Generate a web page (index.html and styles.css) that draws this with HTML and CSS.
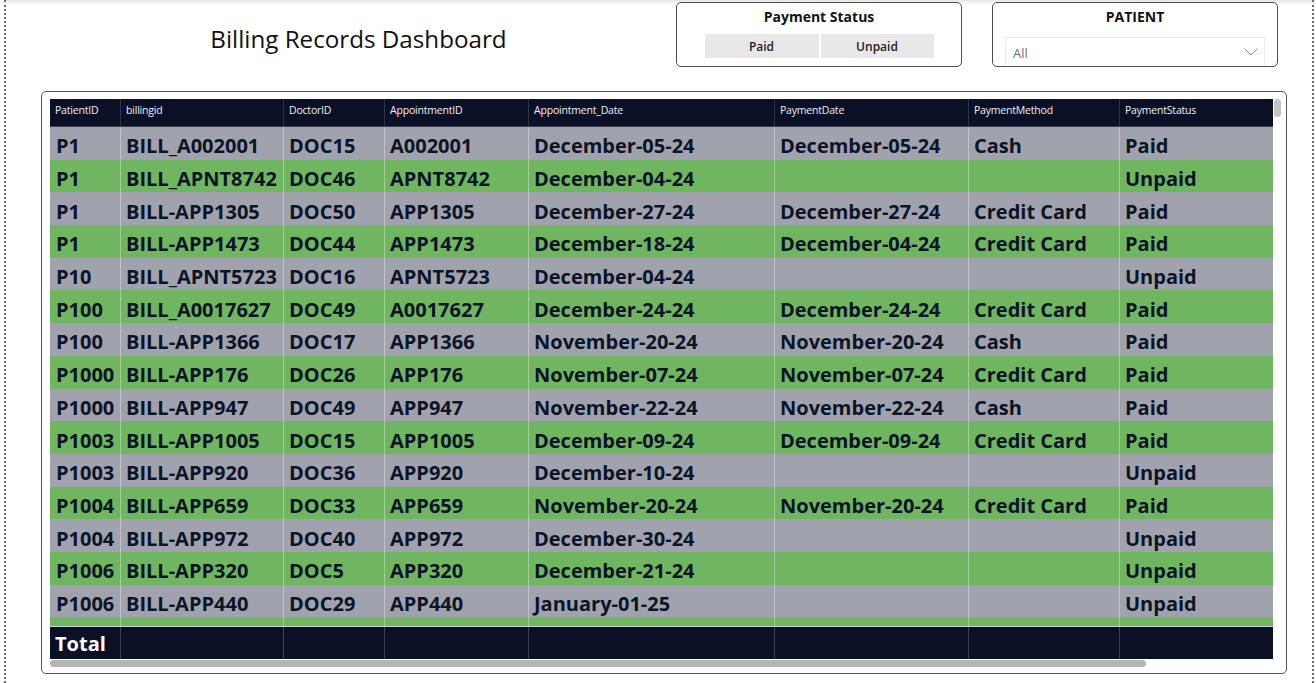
FILE: index.html
```html
<!DOCTYPE html>
<html lang="en">
<head>
<meta charset="utf-8">
<title>Billing Records Dashboard</title>
<link rel="stylesheet" href="styles.css">
</head>
<body>
<div class="page">
  <div class="top">
    <div class="title-box"><h1 class="title">Billing Records Dashboard</h1></div>
    <div class="slicer">
      <div class="slicer-title">Payment Status</div>
      <div class="chips">
        <div class="chip">Paid</div>
        <div class="chip">Unpaid</div>
      </div>
    </div>
    <div class="slicer slicer-patient">
      <div class="slicer-title">PATIENT</div>
      <div class="dropdown">
        <span class="dd-value">All</span>
        <svg class="chev" width="14" height="8" viewBox="0 0 14 8"><path d="M0.5 0.5 L7 7 L13.5 0.5" fill="none" stroke="#8a8a8a" stroke-width="1"/></svg>
      </div>
    </div>
  </div>

  <div class="visual">
    <div class="table">
      <div class="row head">
        <div class="c">PatientID</div><div class="c">billingid</div><div class="c">DoctorID</div><div class="c">AppointmentID</div><div class="c">Appointment_Date</div><div class="c">PaymentDate</div><div class="c">PaymentMethod</div><div class="c">PaymentStatus</div>
      </div>
      <div class="body">
        <div class="row grey"><div class="c">P1</div><div class="c">BILL_A002001</div><div class="c">DOC15</div><div class="c">A002001</div><div class="c">December-05-24</div><div class="c">December-05-24</div><div class="c">Cash</div><div class="c">Paid</div></div>
        <div class="row green"><div class="c">P1</div><div class="c">BILL_APNT8742</div><div class="c">DOC46</div><div class="c">APNT8742</div><div class="c">December-04-24</div><div class="c"></div><div class="c"></div><div class="c">Unpaid</div></div>
        <div class="row grey"><div class="c">P1</div><div class="c">BILL-APP1305</div><div class="c">DOC50</div><div class="c">APP1305</div><div class="c">December-27-24</div><div class="c">December-27-24</div><div class="c">Credit Card</div><div class="c">Paid</div></div>
        <div class="row green"><div class="c">P1</div><div class="c">BILL-APP1473</div><div class="c">DOC44</div><div class="c">APP1473</div><div class="c">December-18-24</div><div class="c">December-04-24</div><div class="c">Credit Card</div><div class="c">Paid</div></div>
        <div class="row grey"><div class="c">P10</div><div class="c">BILL_APNT5723</div><div class="c">DOC16</div><div class="c">APNT5723</div><div class="c">December-04-24</div><div class="c"></div><div class="c"></div><div class="c">Unpaid</div></div>
        <div class="row green"><div class="c">P100</div><div class="c">BILL_A0017627</div><div class="c">DOC49</div><div class="c">A0017627</div><div class="c">December-24-24</div><div class="c">December-24-24</div><div class="c">Credit Card</div><div class="c">Paid</div></div>
        <div class="row grey"><div class="c">P100</div><div class="c">BILL-APP1366</div><div class="c">DOC17</div><div class="c">APP1366</div><div class="c">November-20-24</div><div class="c">November-20-24</div><div class="c">Cash</div><div class="c">Paid</div></div>
        <div class="row green"><div class="c">P1000</div><div class="c">BILL-APP176</div><div class="c">DOC26</div><div class="c">APP176</div><div class="c">November-07-24</div><div class="c">November-07-24</div><div class="c">Credit Card</div><div class="c">Paid</div></div>
        <div class="row grey"><div class="c">P1000</div><div class="c">BILL-APP947</div><div class="c">DOC49</div><div class="c">APP947</div><div class="c">November-22-24</div><div class="c">November-22-24</div><div class="c">Cash</div><div class="c">Paid</div></div>
        <div class="row green"><div class="c">P1003</div><div class="c">BILL-APP1005</div><div class="c">DOC15</div><div class="c">APP1005</div><div class="c">December-09-24</div><div class="c">December-09-24</div><div class="c">Credit Card</div><div class="c">Paid</div></div>
        <div class="row grey"><div class="c">P1003</div><div class="c">BILL-APP920</div><div class="c">DOC36</div><div class="c">APP920</div><div class="c">December-10-24</div><div class="c"></div><div class="c"></div><div class="c">Unpaid</div></div>
        <div class="row green"><div class="c">P1004</div><div class="c">BILL-APP659</div><div class="c">DOC33</div><div class="c">APP659</div><div class="c">November-20-24</div><div class="c">November-20-24</div><div class="c">Credit Card</div><div class="c">Paid</div></div>
        <div class="row grey"><div class="c">P1004</div><div class="c">BILL-APP972</div><div class="c">DOC40</div><div class="c">APP972</div><div class="c">December-30-24</div><div class="c"></div><div class="c"></div><div class="c">Unpaid</div></div>
        <div class="row green"><div class="c">P1006</div><div class="c">BILL-APP320</div><div class="c">DOC5</div><div class="c">APP320</div><div class="c">December-21-24</div><div class="c"></div><div class="c"></div><div class="c">Unpaid</div></div>
        <div class="row grey"><div class="c">P1006</div><div class="c">BILL-APP440</div><div class="c">DOC29</div><div class="c">APP440</div><div class="c">January-01-25</div><div class="c"></div><div class="c"></div><div class="c">Unpaid</div></div>
        <div class="row green"><div class="c"></div><div class="c"></div><div class="c"></div><div class="c"></div><div class="c"></div><div class="c"></div><div class="c"></div><div class="c"></div></div>
      </div>
      <div class="row total">
        <div class="c">Total</div><div class="c"></div><div class="c"></div><div class="c"></div><div class="c"></div><div class="c"></div><div class="c"></div><div class="c"></div>
      </div>
      <div class="hscroll"><div class="hthumb"></div></div>
    </div>
    <div class="vscroll"><div class="vthumb"></div></div>
  </div>
</div>
</body>
</html>
```

FILE: styles.css
```css
html, body {
  margin: 0;
  padding: 0;
  background: #ffffff;
}

body {
  font-family: "Open Sans", "Noto Sans", sans-serif;
  color: #0c1427;
}

.page {
  margin-left: 4px;
  width: 1310px;
  height: 683px;
  box-sizing: border-box;
  border-left: 2px dotted #6b6b6b;
  border-right: 2px dotted #6b6b6b;
  background: linear-gradient(#e6e6e6 0, #f6f6f6 3px, #ffffff 6px);
  overflow: hidden;
}

.top {
  display: flex;
  height: 91px;
  box-sizing: border-box;
  padding-top: 2px;
  padding-left: 35px;
}

.title-box {
  width: 635px;
  height: 72px;
  display: flex;
  align-items: center;
  justify-content: center;
}

.title {
  margin: 0;
  font-weight: 400;
  font-size: 24.2px;
  color: #111111;
  letter-spacing: 0;
}

.slicer {
  width: 286px;
  height: 65px;
  box-sizing: border-box;
  border: 1px solid #4d4d4d;
  border-radius: 5px;
  background: #ffffff;
  display: flex;
  flex-direction: column;
  align-items: center;
  overflow: hidden;
}

.slicer-patient {
  margin-left: 30px;
}

.slicer-title {
  margin-top: 4px;
  height: 20px;
  line-height: 20px;
  font-size: 14px;
  font-weight: 700;
  color: #111111;
}

.chips {
  display: flex;
  gap: 2px;
  margin-top: 7px;
}

.chip {
  width: 114px;
  height: 24px;
  line-height: 25px;
  text-align: center;
  background: #e8e8e8;
  font-size: 12px;
  font-weight: 600;
  color: #222222;
}

.chip + .chip {
  width: 113px;
}

.dropdown {
  margin-top: 10px;
  width: 260px;
  height: 30px;
  box-sizing: border-box;
  border: 1px solid #ececec;
  display: flex;
  align-items: center;
  justify-content: space-between;
  padding: 0 6px 2px 7px;
  flex-shrink: 0;
}

.dd-value {
  font-size: 13px;
  color: #707070;
  padding-top: 3px;
}

.chev {
  display: block;
  margin-top: 1px;
}

.visual {
  margin-left: 35px;
  width: 1246px;
  height: 583px;
  box-sizing: border-box;
  border: 1px solid #555555;
  border-radius: 5px;
  padding: 7px 0 0 8px;
  display: flex;
}

.table {
  width: 1223px;
  display: flex;
  flex-direction: column;
}

.row {
  display: grid;
  grid-template-columns: 71px 163px 101px 144px 246px 194px 151px 153px;
}

.c {
  box-sizing: border-box;
  border-right: 1px solid rgba(255, 255, 255, 0.35);
  padding-left: 5px;
  white-space: nowrap;
  overflow: hidden;
  display: flex;
  align-items: center;
}

.c:first-child {
  padding-left: 6px;
}

.c:last-child {
  border-right: none;
}

.head {
  height: 28px;
  background: #0a1026;
  box-sizing: border-box;
  border-bottom: 1px solid #3a3f52;
}

.head .c {
  font-size: 10.5px;
  color: #eef0f4;
  border-right-color: #2e3447;
  padding-left: 5px;
  padding-bottom: 5px;
  letter-spacing: -0.2px;
}

.body {
  height: 499px;
  overflow: hidden;
}

.body .row {
  height: 32.7px;
}

.body .c {
  font-size: 20px;
  font-weight: 700;
  padding-top: 5px;
  color: #0c1427;
}

.grey {
  background: #a0a3ad;
}

.green {
  background: #70b661;
}

.total {
  height: 33px;
  box-sizing: border-box;
  background: #0a1026;
  border-top: 1px solid #d0d3da;
}

.total .c {
  font-size: 20px;
  font-weight: 700;
  color: #ffffff;
  border-right-color: #3a4054;
  padding-top: 1px;
}

.total .c:first-child {
  padding-left: 5px;
}

.hscroll {
  height: 9px;
  padding-top: 1px;
  box-sizing: border-box;
}

.hthumb {
  width: 1096px;
  height: 7px;
  border-radius: 4px;
  background: #b5b5b5;
}

.vscroll {
  width: 8px;
  padding-left: 1px;
}

.vthumb {
  width: 7px;
  height: 18px;
  border-radius: 4px;
  background: #c4c4c4;
}
```
